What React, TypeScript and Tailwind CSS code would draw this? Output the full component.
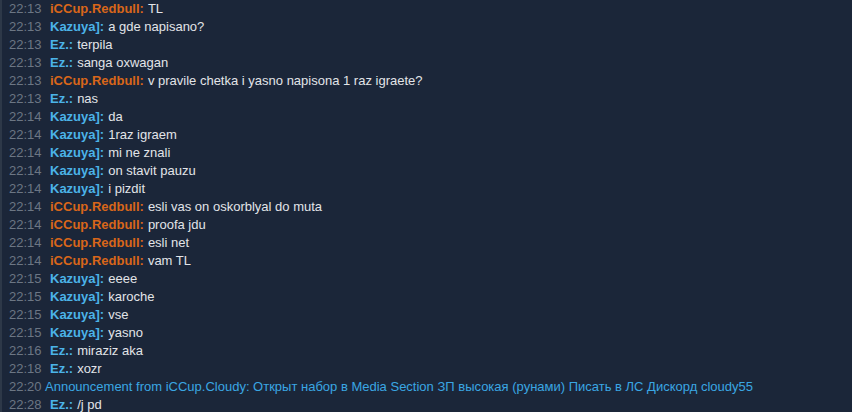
import React from "react";

type Line = {
  time: string;
  name?: string;
  color?: "red" | "blue";
  text: string;
  announce?: boolean;
};

const lines: Line[] = [
  { time: "22:13", name: "iCCup.Redbull:", color: "red", text: "TL" },
  { time: "22:13", name: "Kazuya]:", color: "blue", text: "a gde napisano?" },
  { time: "22:13", name: "Ez.:", color: "blue", text: "terpila" },
  { time: "22:13", name: "Ez.:", color: "blue", text: "sanga oxwagan" },
  { time: "22:13", name: "iCCup.Redbull:", color: "red", text: "v pravile chetka i yasno napisona 1 raz igraete?" },
  { time: "22:13", name: "Ez.:", color: "blue", text: "nas" },
  { time: "22:14", name: "Kazuya]:", color: "blue", text: "da" },
  { time: "22:14", name: "Kazuya]:", color: "blue", text: "1raz igraem" },
  { time: "22:14", name: "Kazuya]:", color: "blue", text: "mi ne znali" },
  { time: "22:14", name: "Kazuya]:", color: "blue", text: "on stavit pauzu" },
  { time: "22:14", name: "Kazuya]:", color: "blue", text: "i pizdit" },
  { time: "22:14", name: "iCCup.Redbull:", color: "red", text: "esli vas on oskorblyal do muta" },
  { time: "22:14", name: "iCCup.Redbull:", color: "red", text: "proofa jdu" },
  { time: "22:14", name: "iCCup.Redbull:", color: "red", text: "esli net" },
  { time: "22:14", name: "iCCup.Redbull:", color: "red", text: "vam TL" },
  { time: "22:15", name: "Kazuya]:", color: "blue", text: "eeee" },
  { time: "22:15", name: "Kazuya]:", color: "blue", text: "karoche" },
  { time: "22:15", name: "Kazuya]:", color: "blue", text: "vse" },
  { time: "22:15", name: "Kazuya]:", color: "blue", text: "yasno" },
  { time: "22:16", name: "Ez.:", color: "blue", text: "miraziz aka" },
  { time: "22:18", name: "Ez.:", color: "blue", text: "xozr" },
  {
    time: "22:20",
    announce: true,
    text: "Announcement from iCCup.Cloudy: Открыт набор в Media Section ЗП высокая (рунами) Писать в ЛС Дискорд cloudy55",
  },
  { time: "22:28", name: "Ez.:", color: "blue", text: "/j pd" },
];

export default function App() {
  return (
    <div className="h-[412px] w-[852px] overflow-hidden bg-[#1b2639] font-['Liberation_Sans',Arial,sans-serif] text-[13px]">
      <div className="flex h-full border-l-2 border-[#2d3848]">
        <div className="flex flex-col pl-[7px]">
          {lines.map((l, i) => (
            <div key={i} className="flex h-[18px] items-center whitespace-nowrap leading-[18px]">
              <span className="w-[36px] text-[#6c7684]">{l.time}</span>
              {l.announce ? (
                <span className="text-[#3aa6e3]">{l.text}</span>
              ) : (
                <>
                  <span
                    className={
                      "ml-[5px] font-bold " +
                      (l.color === "red" ? "text-[#d9661a]" : "text-[#4bb3e8]")
                    }
                  >
                    {l.name}
                  </span>
                  <span className="ml-[4px] text-[#e2e4e8]">{l.text}</span>
                </>
              )}
            </div>
          ))}
        </div>
      </div>
    </div>
  );
}
